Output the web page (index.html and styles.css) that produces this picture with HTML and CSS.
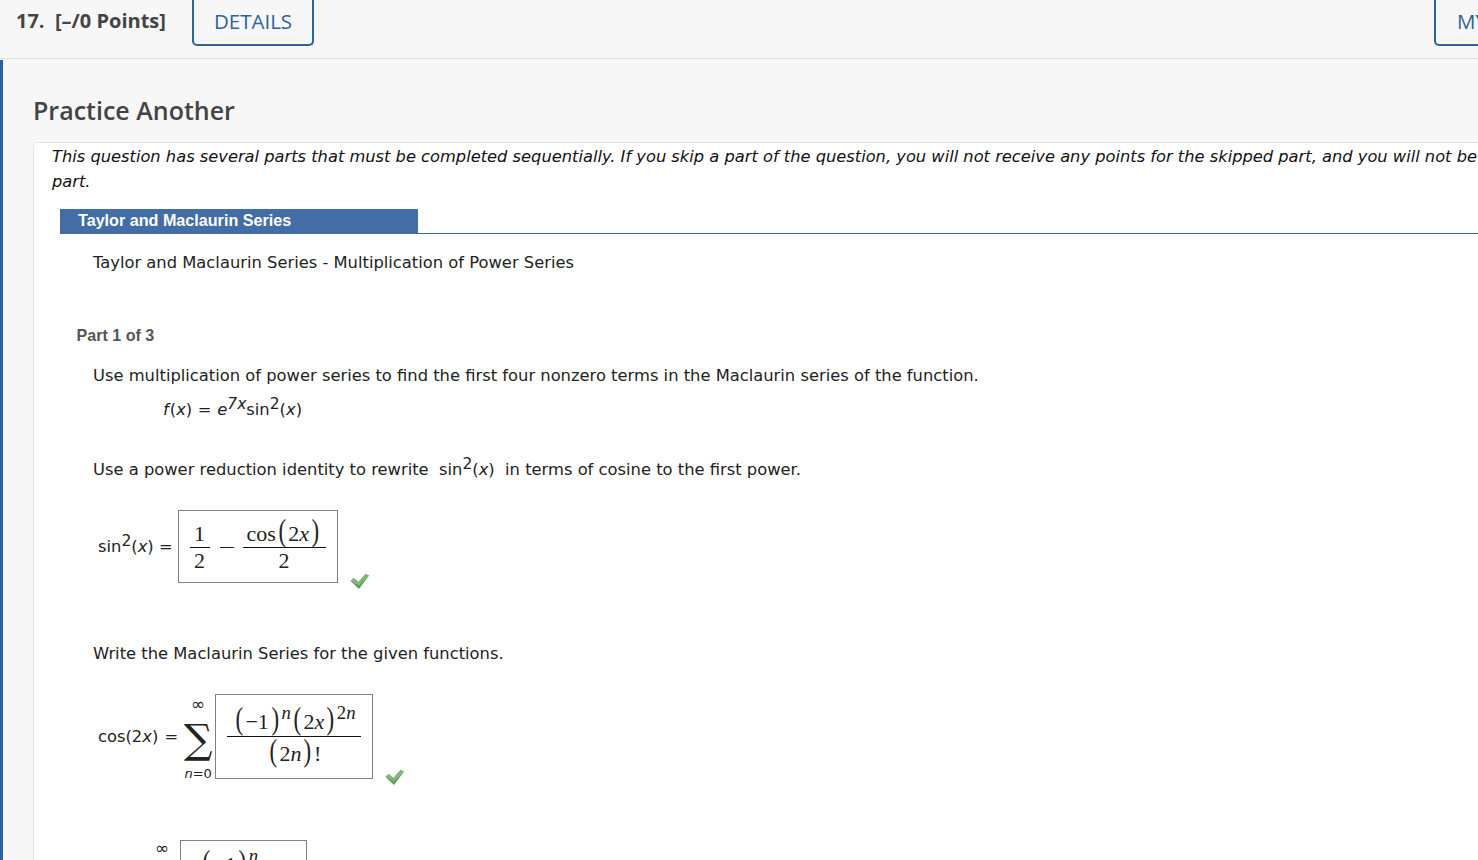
FILE: index.html
```html
<!DOCTYPE html>
<html lang="en">
<head>
<meta charset="utf-8">
<title>Practice Another</title>
<link rel="stylesheet" href="styles.css">
</head>
<body>
<div class="page">
  <header class="qhead">
    <div class="qnum">17.&nbsp; [–/0 Points]</div>
    <div class="tab tab-details">DETAILS</div>
    <div class="tab tab-my">MY NOTES</div>
  </header>
  <main class="qbody">
    <h1 class="practice">Practice Another</h1>
    <section class="card">
      <p class="notice">This question has several parts that must be completed sequentially. If you skip a part of the question, you will not receive any points for the skipped part, and you will not be able to come back to the skipped<br>part.</p>
      <div class="bar-row"><div class="bar">Taylor and Maclaurin Series</div></div>
      <p class="txt subtitle">Taylor and Maclaurin Series - Multiplication of Power Series</p>
      <div class="partlabel">Part 1 of 3</div>
      <p class="txt intro">Use multiplication of power series to find the first four nonzero terms in the Maclaurin series of the function.</p>
      <p class="txt func"><i class="fname">f</i>(<i>x</i>) = <i>e</i><sup><i>7x</i></sup><span>sin</span><sup>2</sup>(<i>x</i>)</p>
      <p class="txt useid">Use a power reduction identity to rewrite &nbsp;sin<sup>2</sup>(<i>x</i>)&nbsp; in terms of cosine to the first power.</p>

      <div class="eq eq-one">
        <span class="lhs">sin<sup>2</sup>(<i>x</i>) =</span>
        <div class="ans ans-one">
          <span class="frac small"><span class="num">1</span><span class="den">2</span></span>
          <span class="minus"></span>
          <span class="frac wide"><span class="num">cos<span class="paren">(</span>2<i>x</i><span class="paren">)</span></span><span class="den">2</span></span>
        </div>
        <svg class="check" viewBox="0 0 20 18" width="20" height="18"><path d="M0.5 9 L3.5 6 L8.5 10 L15.5 2 L19 3.5 L9 17 Z" fill="#5f9c5a"/><path d="M0.5 9 L3.5 6 L8.5 10 L15.5 2 L19 3.5 L9 13.5 Z" fill="#80b878"/></svg>
      </div>

      <p class="txt write">Write the Maclaurin Series for the given functions.</p>

      <div class="eq eq-two">
        <span class="lhs lhs-cos">cos(2<i>x</i>) =</span>
        <span class="sum"><span class="lim inf">∞</span><span class="sigma">∑</span><span class="lim"><i>n</i>=0</span></span>
        <div class="ans ans-two">
          <span class="frac series"><span class="num"><span class="paren">(</span>−1<span class="paren">)</span><sup><i>n</i></sup><span class="paren">(</span>2<i>x</i><span class="paren">)</span><sup>2<i>n</i></sup></span><span class="den"><span class="paren">(</span>2<i>n</i><span class="paren">)</span>!</span></span>
        </div>
        <svg class="check" viewBox="0 0 20 18" width="20" height="18"><path d="M0.5 9 L3.5 6 L8.5 10 L15.5 2 L19 3.5 L9 17 Z" fill="#5f9c5a"/><path d="M0.5 9 L3.5 6 L8.5 10 L15.5 2 L19 3.5 L9 13.5 Z" fill="#80b878"/></svg>
      </div>

      <div class="eq eq-three">
        <span class="lim inf lim-three">∞</span>
        <div class="ans ans-three"><span class="num"><span class="paren">(</span>−1<span class="paren">)</span><sup><i>n</i></sup></span></div>
      </div>
    </section>
  </main>
</div>
</body>
</html>
```
FILE: styles.css
```css
* { box-sizing: border-box; }
html, body { margin: 0; padding: 0; height: 860px; overflow: hidden; background: #f7f7f7; }
.page { width: 1478px; height: 860px; overflow: hidden; font-family: "DejaVu Sans", Verdana, sans-serif; color: #222; }

.qhead { height: 59px; background: #f7f7f7; border-bottom: 1px solid #dedede; display: flex; align-items: flex-start; padding-left: 16px; }
.qnum { font: 700 20px/42px "Open Sans", sans-serif; color: #444; width: 176px; flex: none; white-space: nowrap; }
.tab { height: 46px; border: 2px solid #2c6399; border-top: 0; border-radius: 0 0 5px 5px; font: 500 20.5px/42px "Open Sans", sans-serif; color: #2c6399; background: #f7f7f7; flex: none; }
.tab-details { width: 122px; text-align: center; }
.tab-my { margin-left: 1120px; width: 140px; padding-left: 21px; white-space: nowrap; }

.qbody { margin-top: 1px; height: 801px; border-left: 3px solid #2c6399; padding-left: 30px; }
.practice { margin: 0; padding-top: 31px; padding-bottom: 2px; font: 600 25px/38px "Open Sans", sans-serif; color: #444; }

.card { margin-top: 11px; width: 1500px; height: 800px; background: #fff; border: 1px solid #e2e2e2; border-radius: 5px 0 0 0; padding-top: 1px; }
.notice { margin: 0 0 0 18px; font: italic 16.27px/25px "DejaVu Sans", Verdana, sans-serif; color: #111; white-space: nowrap; }
.bar-row { margin: 15px 0 0 26px; height: 25px; border-bottom: 1px solid #3f6699; }
.bar { width: 358px; height: 25px; background: #426da5; color: #fff; font: 700 16.15px/23px "Liberation Sans", Arial, sans-serif; padding-left: 18px; }

.txt { margin: 0 0 0 59px; font: 16.33px/24px "DejaVu Sans", Verdana, sans-serif; color: #222; white-space: nowrap; }
sup { font-size: 0.95em; line-height: 0; vertical-align: baseline; position: relative; top: -0.4em; }
.fname { margin-right: 1px; }
.subtitle { margin-top: 17px; }
.partlabel { margin: 48px 0 0 42.5px; font: 700 16.1px/24px "Liberation Sans", Arial, sans-serif; color: #555; }
.intro { margin-top: 17px; }
.func { margin: 10px 0 0 129px; word-spacing: 0.5px; }
.useid { margin-top: 36px; }

.eq { display: flex; align-items: center; margin-left: 64px; font: 16.33px/24px "DejaVu Sans", Verdana, sans-serif; color: #222; position: relative; }
.eq-one { margin-top: 28px; }
.eq-two { margin-top: 28px; }
.eq-three { margin: 61px 0 0 121px; align-items: flex-start; }
.lhs { margin-right: 5px; white-space: nowrap; padding-top: 1px; }
.lhs-cos { word-spacing: 1px; }
.write { margin-top: 59px; }
.ans { border: 1px solid #808080; background: #fff; display: flex; align-items: center; font: 22px/26px "Liberation Serif", "Times New Roman", serif; color: #222; flex: none; }
.ans sup { font-size: 0.85em; top: -0.55em; }
.ans-one { width: 160px; height: 73px; padding: 1px 0 0 11px; }
.ans-two { width: 158px; height: 85px; padding: 3px 0 0 11px; }
.ans-three { width: 127px; height: 60px; margin-left: 11px; padding: 11px 0 0 19px; align-items: flex-start; }
.frac { display: inline-flex; flex-direction: column; align-items: stretch; flex: none; }
.frac .num { display: block; border-bottom: 1px solid #111; text-align: center; white-space: nowrap; }
.frac .den { display: block; text-align: center; }
.small { width: 20px; }
.wide { width: 83px; }
.series { width: 134px; }
.series .den { padding-top: 4px; }
.series .num { padding-bottom: 1px; }
.minus { width: 14px; height: 1px; background: #222; margin: 0 9px 0 10px; flex: none; }
.paren { display: inline-block; font-size: 1.45em; line-height: 0; font-weight: 400; margin: 0 1px; transform: scaleX(0.72); }
.check { position: absolute; }
.eq-one .check { left: 252px; top: 62px; }
.eq-two .check { left: 287px; top: 74px; }
.sum { display: flex; flex-direction: column; align-items: center; width: 34px; height: 85px; flex: none; margin-left: -2px; }
.sigma { font: 40px/54px "DejaVu Serif", serif; height: 54px; color: #222; flex: none; }
.lim { font: 13px/16px "DejaVu Sans", Verdana, sans-serif; color: #222; white-space: nowrap; flex: none; }
.inf { font-size: 17px; margin-top: 2px; }
.lim-three { margin-top: 0; }
```
